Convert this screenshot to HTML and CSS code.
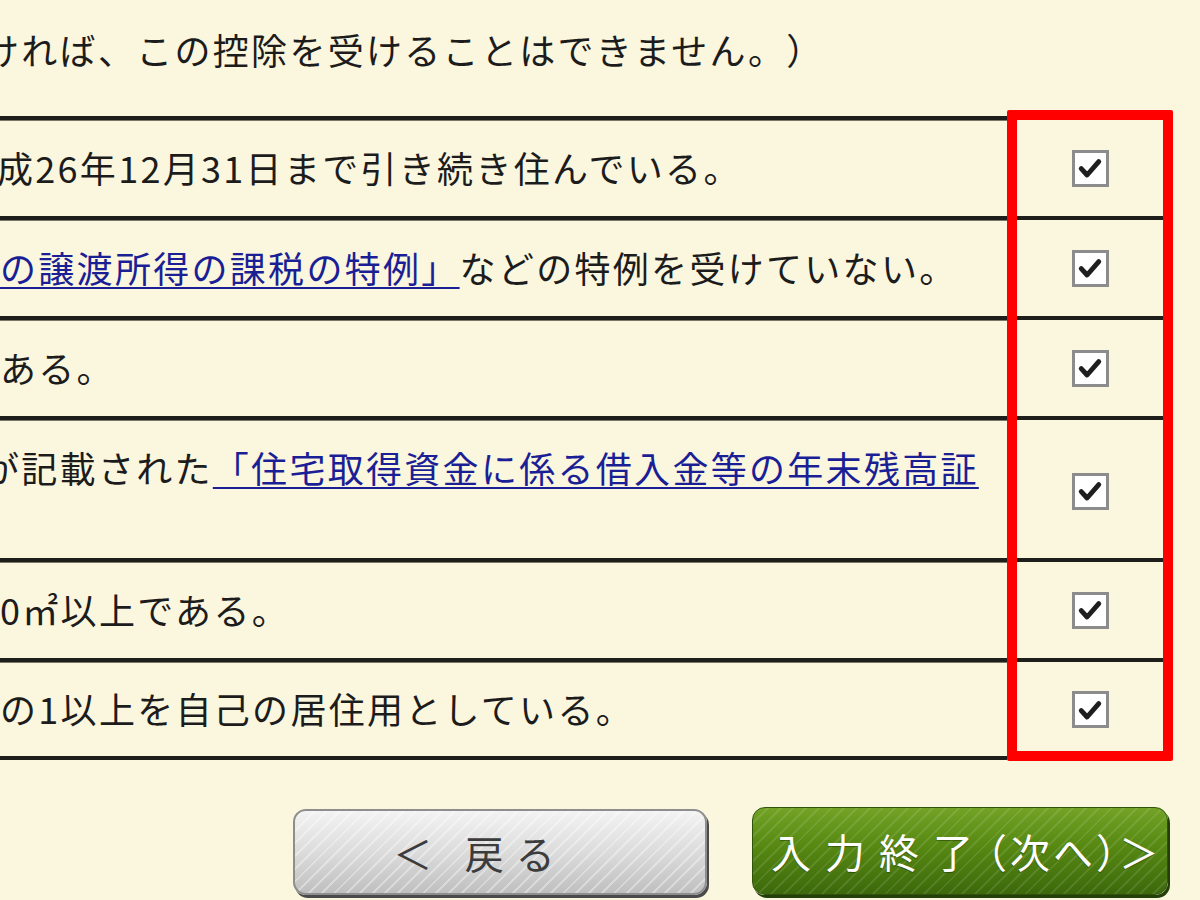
FILE: index.html
```html
<!DOCTYPE html>
<html lang="ja">
<head>
<meta charset="utf-8">
<title>住宅借入金等特別控除の適用要件</title>
<link rel="stylesheet" href="styles.css">
</head>
<body>
<div class="page">
  <p class="note"><span class="clip clip-half">ければ、この控除を受けることはできません。）</span></p>

  <div class="checklist">
    <div class="texts">
      <div class="row"><span class="clip clip-edge">成26年12月31日まで引き続き住んでいる。</span></div>
      <div class="row"><span class="clip"><a href="#" class="ref">の譲渡所得の課税の特例」</a>などの特例を受けていない。</span></div>
      <div class="row"><span class="clip">ある。</span></div>
      <div class="row row-tall"><span class="clip clip-half">が記載された<a href="#" class="ref">「住宅取得資金に係る借入金等の年末残高証</a></span></div>
      <div class="row"><span class="clip">0㎡以上である。</span></div>
      <div class="row row-last"><span class="clip">の1以上を自己の居住用としている。</span></div>
    </div>

    <div class="checks">
      <div class="check check-first"><span class="box"><svg viewBox="0 0 24 24"><path d="M4.5 12.5l5 5.5L19.5 6.5"/></svg></span></div>
      <div class="check"><span class="box"><svg viewBox="0 0 24 24"><path d="M4.5 12.5l5 5.5L19.5 6.5"/></svg></span></div>
      <div class="check"><span class="box"><svg viewBox="0 0 24 24"><path d="M4.5 12.5l5 5.5L19.5 6.5"/></svg></span></div>
      <div class="check check-tall"><span class="box"><svg viewBox="0 0 24 24"><path d="M4.5 12.5l5 5.5L19.5 6.5"/></svg></span></div>
      <div class="check"><span class="box"><svg viewBox="0 0 24 24"><path d="M4.5 12.5l5 5.5L19.5 6.5"/></svg></span></div>
      <div class="check check-last"><span class="box"><svg viewBox="0 0 24 24"><path d="M4.5 12.5l5 5.5L19.5 6.5"/></svg></span></div>
    </div>
  </div>

  <div class="actions">
    <button class="btn btn-back" type="button">＜ 戻る</button>
    <button class="btn btn-next" type="button"><span class="wide">入力終了</span><span class="tight">（次へ）＞</span></button>
  </div>
</div>
</body>
</html>
```

FILE: styles.css
```css
html, body {
  margin: 0;
  padding: 0;
}

body {
  background: #fbf6de;
  font-family: "MS UI Gothic", "Noto Sans CJK JP", "Noto Sans", sans-serif;
  color: #1c1c1c;
  text-spacing-trim: space-all;
  overflow: hidden;
}

.page {
  width: 1200px;
  height: 900px;
  overflow: hidden;
}

/* Sentences that continue from the left of the visible area */
.clip {
  display: block;
  white-space: nowrap;
  font-size: 36px;
  letter-spacing: 2.3px;
  line-height: 46px;
}

.clip-half {
  margin-left: -17px;
}

.clip-edge {
  margin-left: -3px;
}

.note {
  margin: 0;
  height: 116px;
  padding-top: 26px;
  box-sizing: border-box;
}

/* Check list: text column + highlighted check column */
.checklist {
  display: flex;
  align-items: flex-start;
}

.texts {
  width: 1007px;
  flex: none;
}

.row {
  height: 100px;
  border-top: 4px solid #1e1e1a;
  box-shadow: inset 0 1px 0 #7a7868;
  display: flex;
  align-items: center;
  box-sizing: border-box;
  padding-bottom: 2px;
}

.row-tall {
  height: 142px;
  align-items: flex-start;
  padding-top: 24px;
}

.row-last {
  height: 102px;
  border-bottom: 4px solid #1e1e1a;
}

.ref {
  color: #1b1f96;
  text-decoration: underline;
  text-decoration-thickness: 2px;
  text-underline-offset: 4px;
}

.checks {
  width: 146px;
  flex: none;
  margin-top: -6px;
  border: 10px solid #ff0000;
  border-radius: 2px;
}

.check {
  height: 100px;
  border-top: 4px solid #1e1e1a;
  box-sizing: border-box;
  display: flex;
  align-items: center;
  justify-content: center;
}

.check-first {
  height: 96px;
  border-top: 0;
}

.check-tall {
  height: 142px;
  padding-top: 4px;
}

.check-last {
  height: 93px;
  padding-top: 6px;
}

.box {
  width: 31px;
  height: 31px;
  border: 3px solid #8c8c8c;
  background: #ffffff;
  display: flex;
  align-items: center;
  justify-content: center;
}

.box svg {
  width: 28px;
  height: 28px;
  fill: none;
  stroke: #1e1e1e;
  stroke-width: 4.2;
  stroke-linecap: round;
  stroke-linejoin: round;
}

/* Buttons */
.actions {
  display: flex;
  justify-content: flex-end;
  align-items: flex-start;
  gap: 45px;
  padding: 46px 32px 0 0;
}

.btn {
  height: 86px;
  border-radius: 13px;
  font-family: "Noto Sans CJK JP", sans-serif;
  font-size: 40px;
  line-height: 1;
  padding: 0;
  cursor: pointer;
  white-space: nowrap;
}

.btn-back {
  width: 414px;
  margin-top: 2px;
  padding-right: 40px;
  color: #3c3c3c;
  font-size: 39px;
  letter-spacing: 12px;
  border: 2px solid #8e8e8e;
  background:
    repeating-linear-gradient(-45deg, rgba(255, 255, 255, 0.35) 0 2px, rgba(255, 255, 255, 0) 2px 9px),
    linear-gradient(#f3f3f3, #d9d9d9 55%, #bfbfbf);
  box-shadow: 2px 3px 0 #4a4a4a;
}

.btn-next {
  width: 416px;
  height: 88px;
  text-align: left;
  padding-left: 18px;
  color: #ffffff;
  font-size: 40px;
  border: 1px solid #2f5409;
  background:
    repeating-linear-gradient(-45deg, rgba(255, 255, 255, 0.1) 0 2px, rgba(255, 255, 255, 0) 2px 9px),
    linear-gradient(#72a326, #568812 45%, #3c690b);
  box-shadow: 2px 3px 0 #24400a;
  text-shadow: 0 1px 1px rgba(0, 0, 0, 0.35);
}

.btn-next .wide {
  letter-spacing: 14px;
}

.btn-next .tight {
  letter-spacing: 3px;
  font-feature-settings: "halt";
}
```
